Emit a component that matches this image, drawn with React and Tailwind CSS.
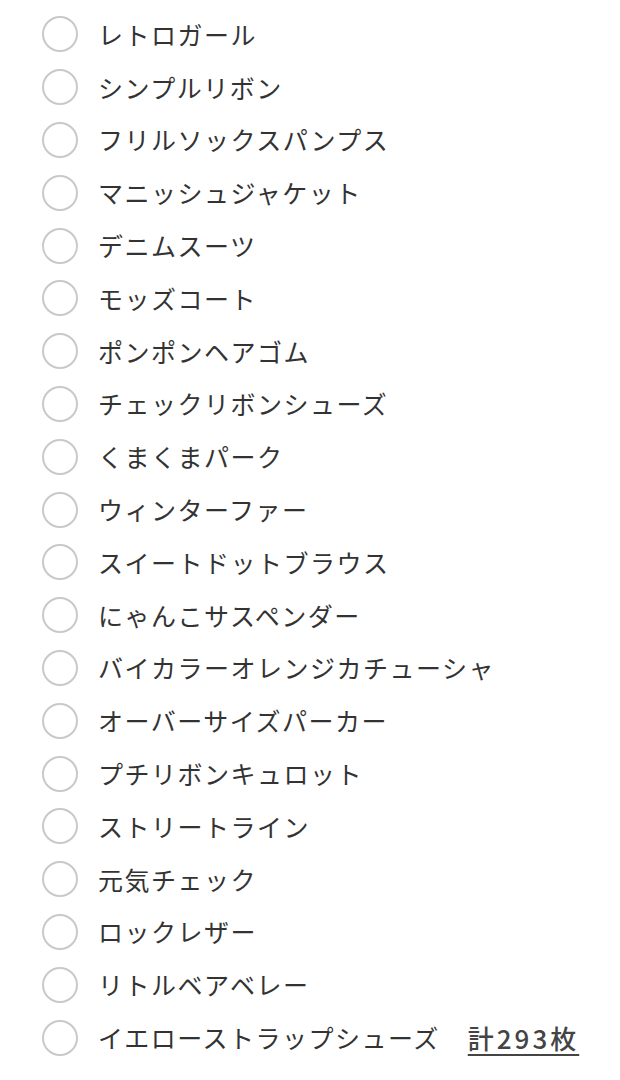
import React from "react";

const items = [
  "レトロガール",
  "シンプルリボン",
  "フリルソックスパンプス",
  "マニッシュジャケット",
  "デニムスーツ",
  "モッズコート",
  "ポンポンヘアゴム",
  "チェックリボンシューズ",
  "くまくまパーク",
  "ウィンターファー",
  "スイートドットブラウス",
  "にゃんこサスペンダー",
  "バイカラーオレンジカチューシャ",
  "オーバーサイズパーカー",
  "プチリボンキュロット",
  "ストリートライン",
  "元気チェック",
  "ロックレザー",
  "リトルベアベレー",
  "イエローストラップシューズ",
];

const font = { fontFamily: '"Noto Sans CJK JP", "Noto Sans", sans-serif' };

export default function App() {
  return (
    <div className="w-[620px] h-[1080px] bg-white pt-[8px] pl-[42px]" style={font}>
      <ul className="flex flex-col">
        {items.map((name, i) => (
          <li key={name} className="flex items-center h-[52.8px]">
            <span className="w-[36px] h-[36px] rounded-full border-2 border-[#c9c9c9] shrink-0" />
            <span className="ml-[20px] text-[25px] tracking-[1.5px] text-[#333] leading-none">
              {name}
            </span>
            {i === items.length - 1 && (
              <span className="ml-[28px] text-[26px] tracking-[3px] font-medium text-[#444] underline underline-offset-[5px] decoration-2 leading-none">
                計293枚
              </span>
            )}
          </li>
        ))}
      </ul>
    </div>
  );
}
